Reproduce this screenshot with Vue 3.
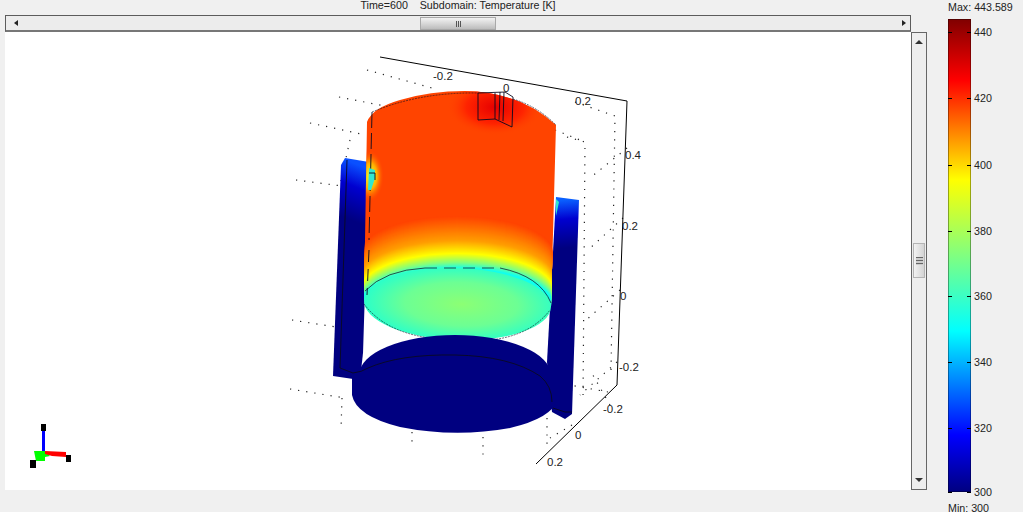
<script setup>
// jet style colour map, t from 0 to 1
const stops = [
  [0, [0, 0, 128]],
  [0.12, [0, 0, 255]],
  [0.34, [0, 255, 255]],
  [0.5, [128, 255, 128]],
  [0.66, [255, 255, 0]],
  [0.87, [255, 0, 0]],
  [1, [128, 0, 0]]
];

function lerp(list, x) {
  for (let i = 1; i < list.length; i++) {
    if (x <= list[i][0]) {
      const a = list[i - 1];
      const b = list[i];
      const k = (x - a[0]) / (b[0] - a[0]);
      return [a, b, k];
    }
  }
  const last = list[list.length - 1];
  return [last, last, 0];
}

function jet(t) {
  const [a, b, k] = lerp(stops, t);
  const c = a[1].map((v, n) => Math.round(v + (b[1][n] - v) * k));
  return `rgb(${c[0]},${c[1]},${c[2]})`;
}

// wall temperature against the centre of the isotherm ellipse
const profile = [
  [252, 0.814],
  [276, 0.74],
  [289, 0.66],
  [298, 0.5],
  [304, 0.36]
];

// isotherm bands on the cylinder wall, painted top down
const bands = [];
for (let y = 252; y <= 304; y += 1) {
  const [a, b, k] = lerp(profile, y);
  bands.push({ y, fill: jet(a[1] + (b[1] - a[1]) * k) });
}

const ticks = [
  { label: 440, y: 32 },
  { label: 420, y: 98 },
  { label: 400, y: 165 },
  { label: 380, y: 231 },
  { label: 360, y: 296 },
  { label: 340, y: 362 },
  { label: 320, y: 428 },
  { label: 300, y: 492 }
];

const labels = [
  { text: '-0.2', x: 433, y: 80 },
  { text: '0', x: 503, y: 92 },
  { text: '0.2', x: 575, y: 105 },
  { text: '0.4', x: 625, y: 159 },
  { text: '0.2', x: 622, y: 230 },
  { text: '0', x: 620, y: 300 },
  { text: '-0.2', x: 619, y: 371 },
  { text: '-0.2', x: 603, y: 413 },
  { text: '0', x: 575, y: 439 },
  { text: '0.2', x: 547, y: 466 }
];

const dotted = [
  'M367 70 L432 88',
  'M339 97 L395 108',
  'M310 123 L366 135',
  'M296 180 L342 186',
  'M292 320 L336 327',
  'M290 389 L345 398',
  'M350 140 L340 185',
  'M342 398 L341 430',
  'M412 432 L412 442',
  'M483 437 L483 456',
  'M547 418 L547 448',
  'M567 137 L585 142 L583 400',
  'M575 102 L615 116 L611 372',
  'M627 148 L590 178',
  'M623 218 L588 250',
  'M620 290 L584 322',
  'M617 362 L580 395',
  'M608 392 L570 385',
  'M572 425 L550 438',
  'M555 130 L580 140',
  'M610 405 L590 370'
];
</script>

<template>
  <div class="page">
    <div class="main">
      <div class="title">Time=600 &nbsp;&nbsp; Subdomain: Temperature [K]</div>
      <div class="hbar">
        <span class="arrow arrow--left"></span>
        <div class="hbar__track">
          <div class="hbar__thumb"><span class="grip grip--v"></span></div>
        </div>
        <span class="arrow arrow--right"></span>
      </div>
      <div class="view">
        <svg class="plot" viewBox="5 32 906 458" width="906" height="458">
          <defs>
            <radialGradient id="faceGlow" cx="0.52" cy="0.5" r="0.55">
              <stop offset="0" stop-color="#8cff74" />
              <stop offset="0.55" stop-color="#6cff94" />
              <stop offset="1" stop-color="#22ffd0" />
            </radialGradient>
            <radialGradient id="hotSpot" cx="0.5" cy="0.45" r="0.5">
              <stop offset="0" stop-color="#e60000" />
              <stop offset="0.6" stop-color="#ff2400" />
              <stop offset="1" stop-color="#ff4400" stop-opacity="0" />
            </radialGradient>
            <radialGradient id="leftGlow" cx="0.5" cy="0.5" r="0.5">
              <stop offset="0" stop-color="#e8ff30" />
              <stop offset="0.5" stop-color="#ffb000" />
              <stop offset="1" stop-color="#ff4400" stop-opacity="0" />
            </radialGradient>
            <linearGradient id="postLeft" gradientUnits="userSpaceOnUse" x1="366" y1="168" x2="346" y2="218">
              <stop offset="0" stop-color="#0a50ff" />
              <stop offset="0.4" stop-color="#0000d0" />
              <stop offset="1" stop-color="#000080" />
            </linearGradient>
            <linearGradient id="postRight" gradientUnits="userSpaceOnUse" x1="562" y1="200" x2="566" y2="248">
              <stop offset="0" stop-color="#0a60ff" />
              <stop offset="0.4" stop-color="#0000d0" />
              <stop offset="1" stop-color="#000080" />
            </linearGradient>
            <clipPath id="wall">
              <path d="M367 122 Q372 108 400 100 Q430 91 465 91 Q520 92 556 125 L551 307 L364 300 Z" />
            </clipPath>
          </defs>

          <path class="dots" v-for="d in dotted" :key="d" :d="d" />

          <path class="axis" d="M380 57 L627 101 L617 385 L536 464" />
          <text v-for="l in labels" :key="l.text + l.x" class="tick" :x="l.x" :y="l.y">{{ l.text }}</text>

          <!-- posts -->
          <path d="M341 165 L345 158 L369 162 L363 353 L360 380 L333 376 Z" fill="url(#postLeft)" />
          <path d="M556 197 L579 200 L572 414 L565 419 L552 412 L547 362 Z" fill="url(#postRight)" />

          <!-- cylinder wall -->
          <g clip-path="url(#wall)">
            <rect x="360" y="88" width="200" height="222" fill="#ff4400" />
            <ellipse cx="495" cy="110" rx="48" ry="28" fill="url(#hotSpot)" />
            <ellipse cx="370" cy="176" rx="14" ry="26" fill="url(#leftGlow)" />
            <ellipse
              v-for="b in bands"
              :key="b.y"
              cx="457"
              :cy="b.y"
              rx="96"
              ry="36"
              :fill="b.fill"
            />
          </g>

          <!-- end face -->
          <ellipse cx="457.5" cy="304" rx="93.5" ry="36" transform="rotate(2 457.5 304)" fill="url(#faceGlow)" />
          <path class="edge edge--fine" d="M365 291 Q385 270 425 268" />
          <path class="edge edge--fine edge--dash" d="M425 268 L500 268" />
          <path class="edge edge--fine" d="M500 268 Q540 276 551 303" />
          <path class="edge edge--thin" d="M364 304 Q385 332 430 338" />
          <path class="edge edge--thin" d="M490 340 Q530 336 550 310" />

          <!-- lower disk -->
          <ellipse cx="455" cy="375" rx="96" ry="40" fill="#000080" />
          <path d="M352 378 L352 395 Q356 416 400 427 Q455 438 510 428 Q552 418 557 400 L557 380 Z" fill="#000080" />
          <path class="edge" d="M347 160 L340 368 L353 373 Q362 372 368 368 Q400 354 455 355 Q510 356 540 376 Q552 386 552 402" />
          <path class="edge" d="M553 408 L565 412 L572 412" />

          <!-- top rim and notch -->
          <path class="edge edge--thin" d="M372 112 Q420 92 478 93 M513 99 Q537 106 556 125" />
          <path class="edge" d="M478 93 L478 120 L495 119 L512 127 L513 97 L505 92 Z M495 93 L495 119 M500 92 L499 120 M504 92 L503 121" />
          <path class="edge edge--dash edge--long" d="M372 112 L369 240" />
          <path class="edge edge--dash" d="M369 250 L367 295" />

          <!-- contact spots -->
          <path d="M369 168 L375 170 L375 178 L371 190 L368 190 Z" fill="#30e8d0" />
          <path class="edge" d="M369 173 L375 173 L375 180" />
          <path d="M556 199 L559 202 L556 216 Z" fill="#30e8d0" />

          <!-- orientation triad -->
          <g>
            <rect x="42" y="431" width="3" height="21" fill="#0000ff" />
            <path d="M34 451 L45 451 L50 456 L45 457 L45 461 L36 461 Z" fill="#00ff00" />
            <path d="M45 451 L66 452 L66 457 L52 456 L45 454 Z" fill="#ff0000" />
            <rect x="41" y="424" width="5" height="7" fill="#000" />
            <rect x="66" y="455" width="5" height="7" fill="#000" />
            <rect x="30" y="460" width="6" height="8" fill="#000" />
          </g>
        </svg>
        <div class="vbar">
          <span class="arrow arrow--up"></span>
          <div class="vbar__track">
            <div class="vbar__thumb"><span class="grip grip--h"></span></div>
          </div>
          <span class="arrow arrow--down"></span>
        </div>
      </div>
    </div>

    <div class="legend">
      <div class="legend__max">Max: 443.589</div>
      <div class="legend__scale">
        <div class="legend__bar"></div>
        <div class="legend__ticks">
          <div
            v-for="t in ticks"
            :key="t.label"
            class="legend__tick"
            :style="{ top: t.y - 19 + 'px' }"
          >
            <span class="legend__mark"></span>
            <span class="legend__num">{{ t.label }}</span>
          </div>
        </div>
      </div>
      <div class="legend__min">Min: 300</div>
    </div>
  </div>
</template>

<style scoped>
.page {
  display: flex;
  width: 1023px;
  height: 512px;
  overflow: hidden;
  background: #f0f0f0;
  font-family: "Liberation Sans", Arial, sans-serif;
  color: #222;
}

.main {
  width: 922px;
  margin-left: 5px;
  display: flex;
  flex-direction: column;
}

.title {
  width: 906px;
  height: 15px;
  line-height: 11px;
  font-size: 10.7px;
  text-align: center;
  white-space: pre;
}

.hbar {
  width: 906px;
  height: 17px;
  box-sizing: border-box;
  border: 1px solid #5c5c5c;
  border-bottom: 2px solid #777;
  background: #ececec;
  display: flex;
  align-items: center;
  justify-content: space-between;
  padding: 0 4px 0 8px;
}

.hbar__track {
  flex: 1;
  height: 100%;
  display: flex;
  justify-content: flex-start;
  padding-left: 402px;
  box-sizing: border-box;
}

.hbar__thumb {
  width: 76px;
  height: 13px;
  margin-top: 1px;
  box-sizing: border-box;
  border: 1px solid #a8a8a8;
  background: linear-gradient(#f2f2f2, #d8d8d8 50%, #bcbcbc);
  display: flex;
  align-items: center;
  justify-content: center;
}

.grip--v {
  width: 5px;
  height: 6px;
  background: repeating-linear-gradient(90deg, #555 0 1px, transparent 1px 2px);
}

.grip--h {
  width: 7px;
  height: 8px;
  background: repeating-linear-gradient(#666 0 1px, #ccc 1px 3px);
}

.arrow {
  width: 0;
  height: 0;
  flex: none;
  border-style: solid;
  border-color: transparent;
}

.arrow--left {
  border-width: 3px 4px 3px 0;
  border-right-color: #222;
}

.arrow--right {
  border-width: 3px 0 3px 4px;
  border-left-color: #222;
}

.arrow--up {
  border-width: 0 4px 4px;
  border-bottom-color: #333;
}

.arrow--down {
  border-width: 4px 4px 0;
  border-top-color: #333;
}

.view {
  display: flex;
  height: 458px;
}

.plot {
  display: block;
  background: #fff;
  flex: none;
}

.vbar {
  width: 16px;
  height: 458px;
  box-sizing: border-box;
  border: 1px solid #666;
  background: #eeeeee;
  display: flex;
  flex-direction: column;
  align-items: center;
  padding: 7px 0;
}

.vbar__track {
  flex: 1;
  width: 100%;
  padding-top: 199px;
  box-sizing: border-box;
  display: flex;
  justify-content: center;
}

.vbar__thumb {
  width: 12px;
  height: 35px;
  box-sizing: border-box;
  border: 1px solid #b4b4b4;
  background: linear-gradient(90deg, #f2f2f2, #d4d4d4);
  display: flex;
  align-items: center;
  justify-content: center;
}

.dots {
  fill: none;
  stroke: #222;
  stroke-width: 1.2;
  stroke-dasharray: 1.2 7;
}

.axis {
  fill: none;
  stroke: #000;
  stroke-width: 1;
}

.tick {
  font-family: "Liberation Sans", Arial, sans-serif;
  font-size: 11.5px;
  fill: #222;
}

.edge {
  fill: none;
  stroke: #0a0a20;
  stroke-width: 0.9;
}

.edge--fine {
  stroke-width: 0.7;
}

.edge--thin {
  stroke-width: 0.6;
  stroke-dasharray: 2 1;
}

.edge--dash {
  stroke-dasharray: 12 7;
}

.edge--long {
  stroke-dasharray: 16 5;
}

.legend {
  width: 96px;
  box-sizing: border-box;
  padding-left: 21px;
  display: flex;
  flex-direction: column;
  font-size: 10.7px;
}

.legend__max {
  flex: none;
  height: 19px;
  line-height: 14px;
  white-space: nowrap;
}

.legend__scale {
  display: flex;
  height: 473px;
  flex: none;
}

.legend__bar {
  width: 23px;
  height: 473px;
  background: linear-gradient(
    to top,
    #000080 0,
    #0000ff 12%,
    #00ffff 34%,
    #80ff80 50%,
    #ffff00 66%,
    #ff0000 87%,
    #800000 100%
  );
  box-shadow: inset 0 0 0 1px rgba(0, 0, 0, 0.35);
}

.legend__ticks {
  position: relative;
  flex: 1;
}

.legend__tick {
  position: absolute;
  left: -23px;
  display: flex;
  align-items: center;
  height: 0;
}

.legend__mark {
  width: 23px;
  height: 1px;
  background: linear-gradient(90deg, #000 0 4px, transparent 4px 19px, #000 19px);
}

.legend__num {
  margin-left: 3px;
}

.legend__min {
  flex: none;
  margin-top: 9px;
  line-height: 14px;
  white-space: nowrap;
}
</style>

<style>
html,
body {
  margin: 0;
  background: #f0f0f0;
}
</style>
